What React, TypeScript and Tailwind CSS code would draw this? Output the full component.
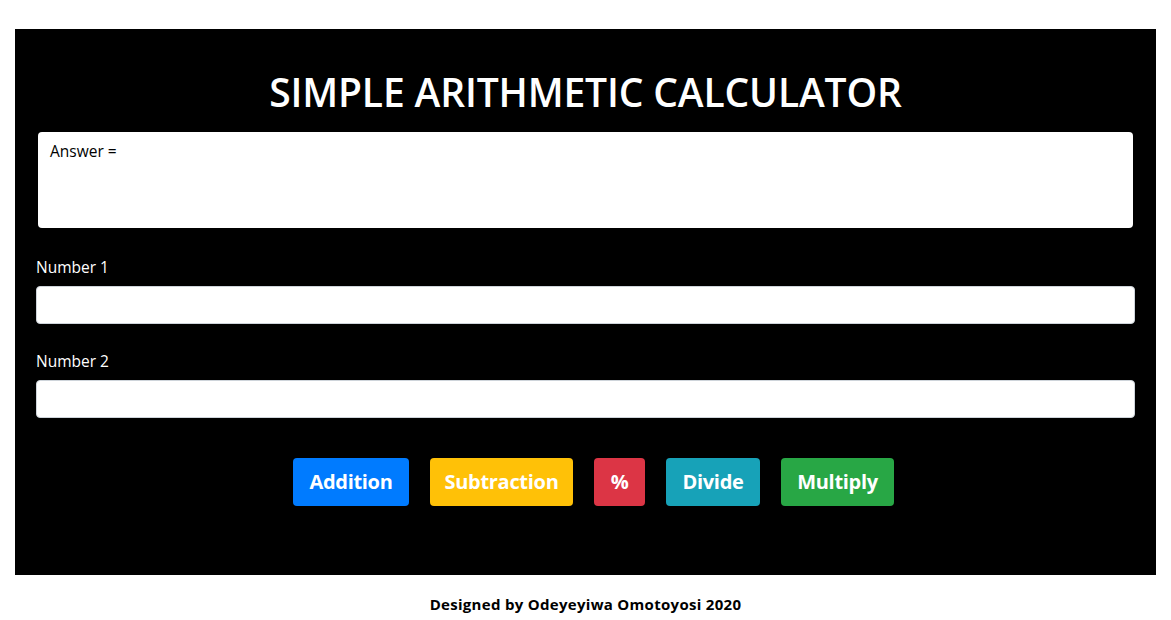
import React from "react";

const font = { fontFamily: '"Open Sans", "Noto Sans", sans-serif' };

const buttons = [
  { label: "Addition", cls: "bg-[#007bff] w-[116px]" },
  { label: "Subtraction", cls: "bg-[#ffc107] w-[143px]" },
  { label: "%", cls: "bg-[#dc3545] w-[51px]" },
  { label: "Divide", cls: "bg-[#17a2b8] w-[94px]" },
  { label: "Multiply", cls: "bg-[#28a745] w-[113px]" },
];

const App = () => {
  return (
    <div className="min-h-[620px] bg-white" style={font}>
      <div className="pt-[29px] px-[15px]">
        <div className="bg-black h-[546px] px-[21px]">
          <h1 className="text-white text-[39px] font-semibold leading-none text-center pt-[43px] h-[103px] tracking-[-0.15px]">
            SIMPLE ARITHMETIC CALCULATOR
          </h1>

          {/* zone de réponse */}
          <div className="mx-[2px] bg-white rounded-[4px] h-[96px] px-[12px] pt-[8px] text-[15.5px] leading-[22px] text-black">
            Answer =
          </div>

          <div className="mt-[29px]">
            <label className="block text-white text-[15.5px] leading-[20px] mb-[9px]">Number 1</label>
            <input className="block w-full h-[38px] bg-white rounded-[4px] border border-[#ced4da] outline-none" />
          </div>

          <div className="mt-[27px]">
            <label className="block text-white text-[15.5px] leading-[20px] mb-[9px]">Number 2</label>
            <input className="block w-full h-[38px] bg-white rounded-[4px] border border-[#ced4da] outline-none" />
          </div>

          <div className="flex justify-center gap-[21px] mt-[40px] pl-[16px]">
            {buttons.map((b) => (
              <button
                key={b.label}
                className={`${b.cls} h-[48px] rounded-[4px] text-white font-bold text-[20px] tracking-[-0.3px]`}
              >
                {b.label}
              </button>
            ))}
          </div>
        </div>
      </div>

      <p className="text-center font-bold text-[15px] leading-[20px] text-black mt-[19px] tracking-[0.3px]">
        Designed by Odeyeyiwa Omotoyosi 2020
      </p>
    </div>
  );
};

export default App;
